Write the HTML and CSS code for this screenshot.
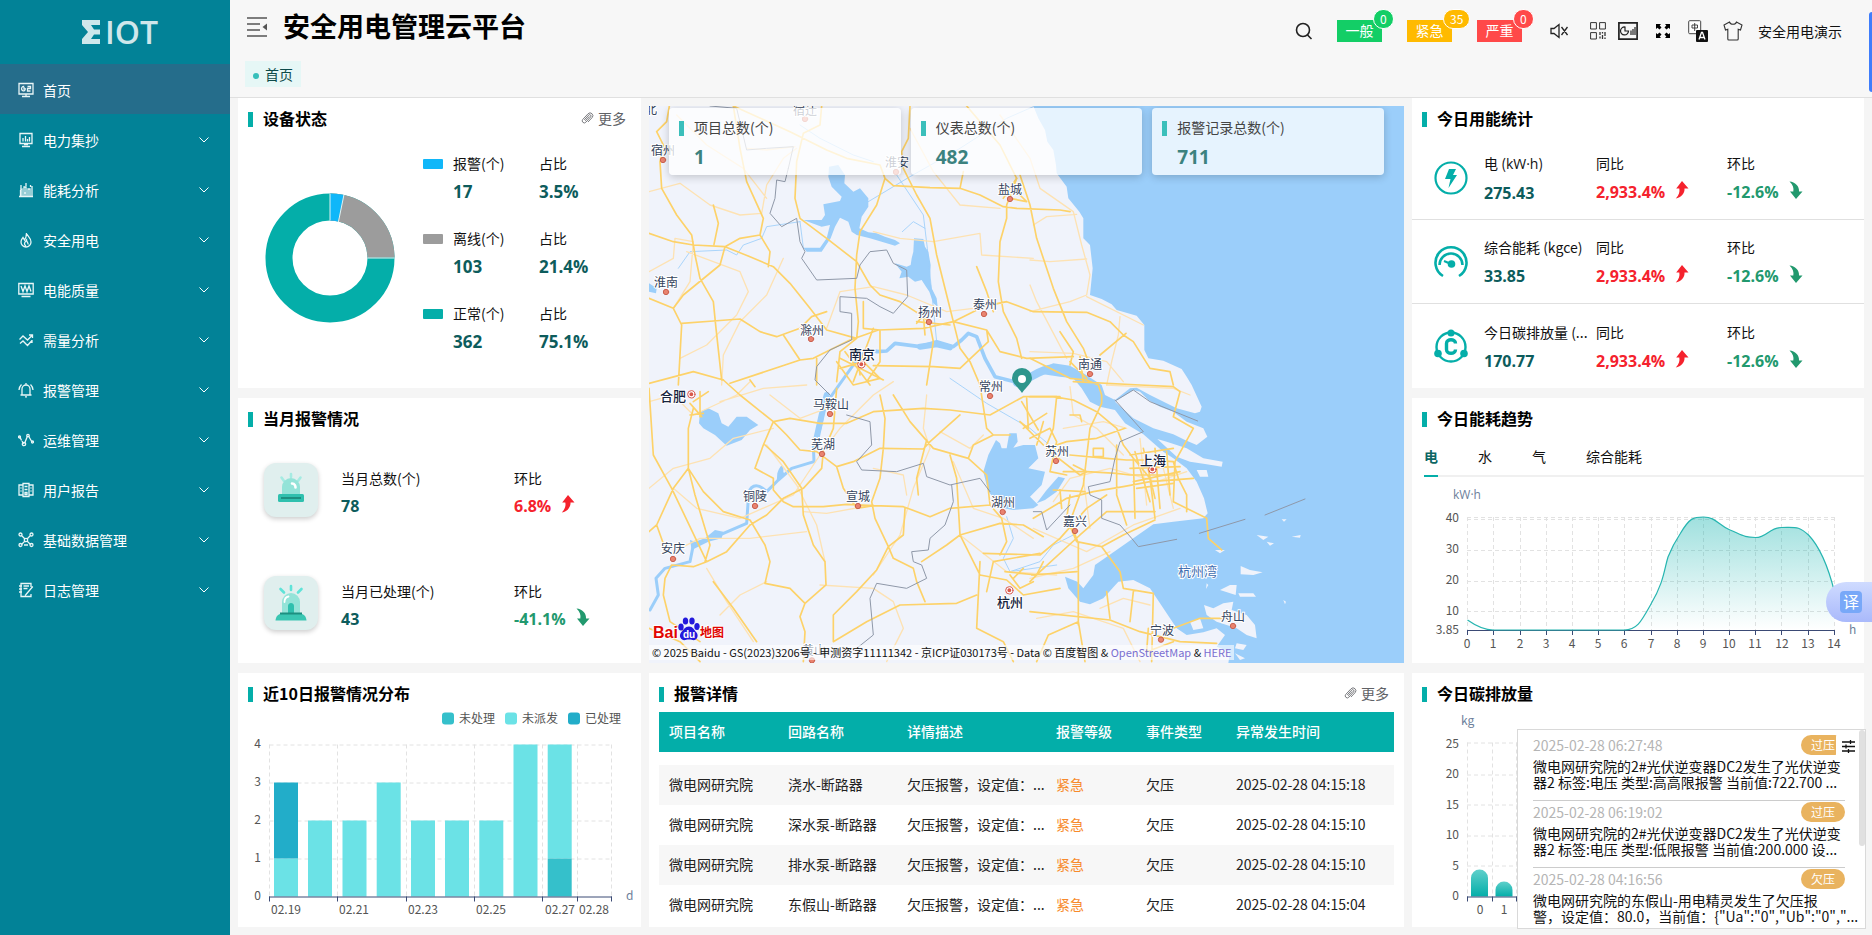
FILE: index.html
```html
<!DOCTYPE html>
<html lang="zh-CN">
<head>
<meta charset="utf-8">
<title>安全用电管理云平台</title>
<link rel="stylesheet" href="styles.css">
</head>
<body>
<svg class="defs" aria-hidden="true">
  <symbol id="chev" viewBox="0 0 12 12"><path d="M1.5 3.5 6 8l4.500-4.500" fill="none" stroke="currentColor"/></symbol>
  <symbol id="up" viewBox="0 0 14 18"><path d="M7 0 13.500 7.500H9.500C10 12 6 17 .8 17.500 4 14 5 11 4.300 7.500H1.200Z" fill="#f5222d"/></symbol>
  <symbol id="down" viewBox="0 0 14 18"><path d="M7 18 13.500 10.500H10C10.500 5 6 1 .5.5 4 4 5 7 4.300 10.500H1Z" fill="#22996e"/></symbol>
  <symbol id="clip" viewBox="0 0 14 14"><path d="M3.500 8.500 8.300 3.300a1.400 1.400 0 0 1 2.100 2L5.200 11a2.200 2.200 0 0 1-3.300-3L7.600 1.900a3 3 0 0 1 4.300 4.200L7.500 10.800M4.500 9.500 9 4.700" fill="none" stroke="currentColor" stroke-width=".9"/></symbol>
</svg>
<div class="app">
  <aside class="side">
    <div class="logo">
      <svg width="19" height="24" viewBox="0 0 19 24"><path d="M0 0H18V5H9l3 4.500h6v5h-6L9 19h9v5H0v-5l6-7-6-7Z" fill="currentColor"/></svg><span>IOT</span>
    </div>
    <nav>
      <a class="item on" href="#"><svg class="mi" viewBox="0 0 16 16"><path d="M1 1.500h14v10.500H1ZM4 14.500h8M8 12v2.500M6.200 4.500a2.200 2.200 0 1 0 1 3.800M6 5v2h2M9.500 4.500h3v2h-3v2.500h3"/></svg>首页</a>
      <a class="item" href="#"><svg class="mi" viewBox="0 0 16 16"><path d="M2 1.500h12v10H2ZM4 14.500h8M6 12.500h4M5 9.500V6M7.500 9.500V4M9.500 9.500V7M11.500 9.500V5"/></svg>电力集抄<svg class="chev"><use href="#chev"/></svg></a>
      <a class="item" href="#"><svg class="mi" viewBox="0 0 16 16"><path d="M1 14.500h14M2.500 14V8M2 7h2v7M6 14V5h2v9M10 14V7h2v7M14 14V4M8 1v3M3 3v3M12.500 3v2M5.500 11h2"/></svg>能耗分析<svg class="chev"><use href="#chev"/></svg></a>
      <a class="item" href="#"><svg class="mi" viewBox="0 0 16 16"><path d="M8.500 1C9 4 13 5.500 13 10a5 5 0 0 1-10 0c0-2 1-3 2-4.500L6.500 8C8 6 8.500 4 8.500 1ZM8 14c-3-2-1-4 .5-6 0 2 2 2.500 1.500 4.500"/></svg>安全用电<svg class="chev"><use href="#chev"/></svg></a>
      <a class="item" href="#"><svg class="mi" viewBox="0 0 16 16"><path d="M.8 1.500h14.400v10.500H.8ZM3.500 14.500h9M3 4l2 5.500L7 4l2 5.500L11 4l2 5.500"/></svg>电能质量<svg class="chev"><use href="#chev"/></svg></a>
      <a class="item" href="#"><svg class="mi" viewBox="0 0 16 16"><path d="M1.500 7.500 5 4l4.500 4L14 3.500M11 3h3.500v3M2 11.500l3-2.500 4.500 4.500L14 8.500M14 8v3"/></svg>需量分析<svg class="chev"><use href="#chev"/></svg></a>
      <a class="item" href="#"><svg class="mi" viewBox="0 0 16 16"><path d="M2.500 13h11M4 13V7a4 4 0 0 1 8 0v6M8 1v2M7 14.800h2M1 8c0-3 1-4 2.500-5.500M15 8c0-3-1-4-2.500-5.500"/></svg>报警管理<svg class="chev"><use href="#chev"/></svg></a>
      <a class="item" href="#"><svg class="mi" viewBox="0 0 16 16"><path d="M2 5l1.500 3.500M4 9l1.500 3M6.500 11.500 9.500 4M10.500 4l3.500 6"/><circle cx="1.500" cy="5" r="1"/><circle cx="6" cy="12" r="1.700"/><circle cx="10" cy="3.500" r="1.200"/><circle cx="14.500" cy="10" r="1"/></svg>运维管理<svg class="chev"><use href="#chev"/></svg></a>
      <a class="item" href="#"><svg class="mi" viewBox="0 0 16 16"><path d="M1 3h4v10H1ZM5 1.500h6v13H5ZM11 3h4v10h-4ZM2.500 6h1M2.500 9h1M12.500 6h1M12.500 9h1M6.500 4.500h3M6.500 7.500h3M7 10.500h2v2H7Z"/></svg>用户报告<svg class="chev"><use href="#chev"/></svg></a>
      <a class="item" href="#"><svg class="mi" viewBox="0 0 16 16"><path d="M3.500 3.500 7 7M12.500 3.500 9 7M3.500 12.500 7 9M12.500 12.500 9 9M6 13h4"/><circle cx="2.500" cy="2.500" r="1.500"/><circle cx="13.500" cy="2.500" r="1.500"/><circle cx="2.500" cy="13" r="1.500"/><circle cx="13.500" cy="13" r="1.500"/><circle cx="8" cy="8" r="1.700"/></svg>基础数据管理<svg class="chev"><use href="#chev"/></svg></a>
      <a class="item" href="#"><svg class="mi" viewBox="0 0 16 16"><path d="M13 5V1.500H3v13h10V12M1 4h3M1 7h3M1 10h3M5.500 4h5.500M5.500 6.500h4M14.800 4.500 8 12.500l-1 1"/></svg>日志管理<svg class="chev"><use href="#chev"/></svg></a>
    </nav>
  </aside>

  <div class="body">
    <header>
      <div class="bar">
        <button class="ib fold" aria-label="折叠菜单"><svg width="20" height="20" viewBox="0 0 20 20"><path d="M0 1h20M0 7h13M0 13h13M0 19h20" stroke="#555" stroke-width="1.500" fill="none"/><path d="M20 6.500v7L15.500 10Z" fill="#555"/></svg></button>
        <h1>安全用电管理云平台</h1>
        <div class="tools">
          <button class="ib t-search" aria-label="搜索"><svg width="18" height="18" viewBox="0 0 18 18"><circle cx="8" cy="8" r="6.500" fill="none" stroke="#222" stroke-width="1.600"/><path d="m12.500 13 4 4" stroke="#222" stroke-width="1.600"/></svg></button>
          <button class="lv green">一般<span>0</span></button>
          <button class="lv amber">紧急<span>35</span></button>
          <button class="lv red">严重<span>0</span></button>
          <button class="ib t-mute" aria-label="静音"><svg width="18" height="16" viewBox="0 0 18 16"><path d="M1 5.500v5h3l5 4V1.500l-5 4ZM11.500 4l6 8M17.500 4l-6 8" fill="none" stroke="#222" stroke-width="1.300"/></svg></button>
          <button class="ib t-qr" aria-label="二维码"><svg width="16" height="18" viewBox="0 0 16 18"><path d="M.6.6h5.800v6.400H.6ZM9.600.6h5.800v6.400H9.600ZM.6 10.600h5.800V17H.6Z" fill="none" stroke="#333"/><path d="M10 10v3M10 14.500v2M12.500 10v1.500M12.500 13v4M15 10v4M15 15.500V17" stroke="#333" stroke-width="1.300"/></svg></button>
          <button class="ib t-chart" aria-label="图表"><svg width="20" height="18" viewBox="0 0 20 18"><path d="M.9.9h18.200v16.200H.9Z" fill="none" stroke="#222" stroke-width="1.700"/><path d="M7 5a4 4 0 1 0 3.500 4H7ZM13 13V8.500M15 13V7M17 13V5" fill="none" stroke="#222" stroke-width="1.200"/></svg></button>
          <button class="ib t-full" aria-label="全屏"><svg width="14" height="14" viewBox="0 0 14 14"><path d="M0 0h5L3.700 1.500 5.500 3.500l-2 2L1.500 3.700 0 5ZM14 0v5l-1.500-1.300-2 1.800-2-2 1.800-2L9 0ZM0 14V9l1.500 1.300 2-1.800 2 2-1.800 2L5 14ZM14 14H9l1.300-1.500-1.800-2 2-2 2 1.800L14 9Z" fill="#000"/></svg></button>
          <button class="ib t-lang" aria-label="切换语言"><svg width="20" height="22" viewBox="0 0 20 22"><rect x=".7" y=".7" width="12" height="13" rx="1" fill="#fff" stroke="#444"/><rect x="8" y="10" width="12" height="12" rx="1" fill="#111"/><path d="M4 5h5.500v3H4ZM6.700 3v8" fill="none" stroke="#333" stroke-width=".9"/><path d="m11 19.500 2.500-7h1l2.500 7M12 17.500h4" fill="none" stroke="#fff" stroke-width="1.300"/></svg></button>
          <button class="ib t-skin" aria-label="主题"><svg width="20" height="20" viewBox="0 0 20 20"><path d="M6.500 1 1 4l1.500 5 2.300-.8V18q0 1 1 1h8.400q1 0 1-1V8.200l2.300.8L19 4l-5.500-3C12.500 4 7.500 4 6.500 1Z" fill="none" stroke="#333" stroke-width="1.100"/></svg></button>
          <a class="user" href="#">安全用电演示</a>
        </div>
      </div>
      <div class="tabs"><a class="tab" href="#">首页</a></div>
    </header>

    <main>
      <section class="card c-dev">
        <div class="hd"><h2>设备状态</h2><a class="more" href="#"><svg><use href="#clip"/></svg>更多</a></div>
        <div class="dev">
          <svg class="donut" viewBox="0 0 130 130" role="img" aria-label="设备状态占比">
            <g transform="rotate(-90 65 65)" fill="none" stroke-width="27">
              <circle cx="65" cy="65" r="51" stroke="#04aea9"/>
              <circle cx="65" cy="65" r="51" stroke="#9c9c9c" pathLength="1000" stroke-dasharray="249 751"/>
              <circle cx="65" cy="65" r="51" stroke="#10b7f9" pathLength="1000" stroke-dasharray="35 965"/>
            </g>
            <path d="M65 .5v27M78.900 2l-5.500 27M102.500 65h27" stroke="#dff3f3" stroke-width="1"/>
          </svg>
          <div class="stat">
            <i class="sw blue"></i><span>报警(个)</span><span>占比</span><b>17</b><b>3.5%</b>
            <i class="sw gray"></i><span>离线(个)</span><span>占比</span><b>103</b><b>21.4%</b>
            <i class="sw teal"></i><span>正常(个)</span><span>占比</span><b>362</b><b>75.1%</b>
          </div>
        </div>
      </section>

      <section class="card c-mon">
        <div class="hd"><h2>当月报警情况</h2></div>
        <div class="mon">
          <div class="mrow">
            <div class="tile"><svg width="32" height="36" viewBox="0 0 32 36"><path d="M16 2v3M6.500 5.500 9 9M25.500 5.500 23 9" stroke="#a5ebe2" stroke-width="2.600" stroke-linecap="round"/><path d="M7 24V15a9 9 0 0 1 18 0v9Z" fill="#94e3d8"/><path d="M17 11.500c3 0 3.500 3 3.500 4" fill="none" stroke="#fff" stroke-width="2.600" stroke-linecap="round"/><rect x="3" y="22" width="26" height="8" rx="1.500" fill="#2fc0ae"/><path d="M6 26h20" stroke="#1d8f80" stroke-width="2"/></svg></div>
            <div class="mt"><span>当月总数(个)</span><b>78</b></div>
            <div class="mt"><span>环比</span><b class="r">6.8%<svg class="ar"><use href="#up"/></svg></b></div>
          </div>
          <div class="mrow">
            <div class="tile"><svg width="32" height="40" viewBox="0 0 32 40"><path d="M16 3v4M5.500 6 9 9.500M26.500 6 23 9.500" stroke="#5fe3d8" stroke-width="2.600" stroke-linecap="round"/><path d="M7 31V19a9 9 0 0 1 18 0v12Z" fill="#94e3d8"/><path d="M9.500 19c0-3 1.500-5 4-5.500" fill="none" stroke="#fff" stroke-width="1.800" stroke-linecap="round"/><path d="M13 31v-8c0-4 6-4 6 0v8Z" fill="#2fc0ae"/><path d="M.500 37.500C1 33 3 31.500 6 30.500h20c3 1 5 2.500 5.500 7Z" fill="#3ac6b2"/><path d="M5 30.500h22" stroke="#1d8f80" stroke-width="2"/></svg></div>
            <div class="mt"><span>当月已处理(个)</span><b>43</b></div>
            <div class="mt"><span>环比</span><b class="g">-41.1%<svg class="ar"><use href="#down"/></svg></b></div>
          </div>
        </div>
      </section>

      <section class="card c-ten">
        <div class="hd"><h2>近10日报警情况分布</h2></div>
        <svg class="chart" viewBox="238 708 403 218" role="img" aria-label="近10日报警情况分布">
          <g class="lab"><rect x="442" y="712" width="12" height="12" rx="3" fill="#35c0cb"/><text x="459" y="722">未处理</text><rect x="505" y="712" width="12" height="12" rx="3" fill="#6be2e6"/><text x="522" y="722">未派发</text><rect x="568" y="712" width="12" height="12" rx="3" fill="#22adc9"/><text x="585" y="722">已处理</text></g>
          <path class="grid" d="M269.500 744.500H611M269.500 782.500H611M269.500 820.500H611M269.500 858.500H611M269.500 744V896M337.500 744V896M406.500 744V896M474.500 744V896M542.500 744V896M577.500 744V896M611.500 744V896"/>
          <g fill="#6be2e6"><path d="M274 858h24v38h-24ZM308 820h24v76h-24ZM342.500 820h24v76h-24ZM376.700 782h24v114h-24ZM411 820h24v76h-24ZM445 820h24v76h-24ZM479.300 820h24v76h-24ZM513.500 744h24v152h-24ZM547.700 744h24v114h-24Z"/></g>
          <path d="M274 782h24v76h-24Z" fill="#22adc9"/><path d="M547.700 858h24v38h-24Z" fill="#35c0cb"/>
          <path class="axis" d="M269 896.500H612M269.500 896v5M337.500 896v5M406.500 896v5M474.500 896v5M542.500 896v5M577.500 896v5M611.500 896v5"/>
          <g class="lab end"><text x="261" y="747">4</text><text x="261" y="785">3</text><text x="261" y="823">2</text><text x="261" y="861">1</text><text x="261" y="899">0</text></g>
          <g class="lab mid"><text x="286" y="913">02.19</text><text x="354" y="913">02.21</text><text x="423" y="913">02.23</text><text x="491" y="913">02.25</text><text x="560" y="913">02.27</text><text x="594" y="913">02.28</text></g>
          <text class="unit" x="626" y="899">d</text>
        </svg>
      </section>

      <section class="map">
        <svg class="mapsvg" viewBox="0 0 755 557" preserveAspectRatio="xMidYMid slice" role="img" aria-label="项目分布地图">
          <rect width="755" height="557" fill="#f0f3fb"/>
          <g transform="translate(-9 -11) scale(.33333)" stroke-linejoin="round" stroke-linecap="round">
            <g class="water">
              <path d="M1180 33 1195 70 1215 105 1222 140 1240 165 1248 210 1250 235 1280 275 1285 310 1318 350 1330 370 1330 430 1350 450 1358 520 1350 600 1385 612 1415 628 1430 645 1490 662 1513 690 1513 765 1525 790 1570 797 1625 822 1640 845 1655 870 1685 935 1680 950 1665 955 1610 940 1530 900 1490 878 1470 880 1425 915 1395 900 1385 870 1330 835 1290 812 1240 805 1200 822 1210 838 1260 845 1300 850 1325 880 1350 920 1380 935 1425 945 1455 985 1510 1018 1570 1070 1600 1090 1640 1120 1670 1160 1692 1210 1703 1255 1690 1270 1600 1280 1540 1288 1480 1330 1420 1372 1365 1410 1360 1440 1330 1480 1312 1460 1275 1445 1285 1480 1320 1520 1350 1528 1390 1510 1435 1460 1480 1455 1530 1480 1560 1525 1590 1570 1610 1600 1640 1620 1690 1612 1730 1600 1755 1620 1730 1655 1770 1670 1765 1705 2300 1710 2300 33Z"/>
              <path d="M567 215 595 210 615 240 613 265 640 290 660 280 685 310 685 335 665 365 658 400 685 412 710 415 735 425 765 435 780 445 765 452 725 440 690 430 650 420 635 410 625 380 600 368 585 395 572 430 545 470 500 470 490 458 540 458 560 430 570 390 545 395 490 375 545 375 555 360 550 328 600 318 605 305 575 275 565 245Z"/>
              <path d="M822 430 850 432 855 455 865 470 872 510 870 550 875 580 890 610 893 635 880 625 868 590 858 575 845 555 825 560 805 545 778 550 785 530 765 505 800 515 812 510 815 490 820 470Z"/>
              <path d="M180 950 205 940 235 955 245 985 265 995 290 965 320 965 355 990 330 1005 305 1035 260 1052 225 1020 190 1000 177 985Z"/>
              <path d="M1068 1035 1080 1045 1085 1060 1100 1060 1108 1015 1130 1015 1133 1040 1120 1058 1150 1050 1185 1050 1195 1090 1165 1120 1215 1130 1205 1170 1170 1205 1195 1230 1180 1240 1120 1245 1090 1240 1045 1190 1030 1130 1045 1080Z"/>
              <path d="M1190 1225 1220 1185 1255 1145 1275 1150 1250 1190 1215 1215Z"/>
              <path d="M27 565 50 580 48 595 27 590Z"/>
              <path d="M412 1135C420 1110 432 1100 430 1130L435 1140 410 1160ZM150 1335 165 1340 195 1330 225 1305 250 1310 245 1330 205 1340 155 1365Z"/>
            </g>
            <g class="river">
              <path d="M710 770 740 768 765 745 840 755 890 740 940 755 965 735 985 715 1010 725 1035 790 1065 845 1130 862" stroke-width="11"/>
              <path d="M710 768C680 765 660 775 640 810L590 880 555 930 540 1000 520 1050 522 1100 455 1120 415 1155 380 1190C350 1160 325 1170 325 1210L320 1285 240 1320 160 1350 150 1400 75 1420 48 1450 55 1500 30 1545" stroke-width="9"/>
              <path d="M1130 862C1180 850 1190 825 1240 820" stroke-width="24"/>
              <path d="M560 900 545 960 525 1050M840 755 890 748 930 757" stroke-width="18"/>
              <path d="M685 320 810 245 960 160 1100 70 1180 35M770 240 850 360 862 460 890 740M480 380 380 395 365 430 310 450 290 480 260 465 150 470 115 520M480 90 540 130 640 180 700 200M787 410 820 380 855 400M930 850 1040 925 1170 1000 1240 1060M1100 1265 1120 1330 1090 1390 1110 1430M1110 1430 1200 1400 1240 1350 1300 1320M1110 1430 1250 1410M480 380 490 458" stroke-width="2.500"/>
            </g>
            <g class="land">
              <path d="M1425 920 1480 885 1500 890 1525 915 1560 935 1600 950 1640 980 1690 1000 1702 1025 1670 1050 1635 1035 1600 1018 1540 1000 1480 970Z"/>
              <path d="M1552 1032 1580 1040 1640 1060 1690 1090 1748 1100 1745 1115 1700 1108 1650 1100 1610 1085Z"/>
              <path d="M1670 1125 1700 1125 1705 1145 1680 1145ZM1740 1485 1770 1470 1790 1470 1787 1500ZM1795 1495 1840 1495 1848 1505 1800 1505ZM1802 1413 1830 1425 1868 1432 1840 1440 1802 1438ZM1850 1320 1885 1325 1870 1335ZM1880 1340 1902 1345 1890 1352ZM1955 1325 1982 1320 1980 1328ZM1925 1273 1940 1273 1932 1280ZM1930 1515 1938 1520 1935 1528ZM1692 1530 1720 1540 1750 1525 1780 1520 1775 1545 1820 1560 1845 1590 1850 1630 1820 1620 1790 1600 1730 1580 1700 1560ZM1650 1580 1680 1570 1690 1600 1660 1605ZM1790 1645 1820 1650 1810 1665 1785 1660ZM1785 1675 1815 1690 1800 1695ZM1725 1365 1755 1365 1740 1375ZM1700 1465 1705 1470 1698 1482Z"/>
            </g>
            <g class="minor">
              <path d="M27 290 120 265 210 330 300 360 365 355 380 270 430 190 470 160M110 60 200 150 310 220 380 310M320 160 380 165 465 155M27 530 100 490 105 430 160 440 150 560 100 640M140 470 300 530 325 590 290 660 200 750 120 790M430 490 380 600 300 680 250 780 245 870M560 700 600 590 700 575 800 600 920 650 1000 640 1100 620M700 410 780 430 880 440 1020 415 1025 480 1180 490M810 100 880 230 960 330 1080 340M1080 60 1170 190 1200 280 1300 350 1325 450 1350 540 1340 600 1290 620 1170 650M1180 390 1220 365 1310 358M1170 495 1230 500 1340 492M1170 570 1190 620 1280 790M1440 665 1435 720 1415 800 1400 870M1340 605 1510 690"/>
              <path d="M27 920 100 900 160 960 290 900 330 860M380 1050 470 1170 530 1290 555 1400M27 1180 100 1120 210 1090 280 1030 400 1000M100 1180 170 1240 300 1270 460 1200 540 1080 600 1000 700 900 760 860M200 1420 260 1520 340 1640M240 1560 300 1500 380 1460M540 1470 700 1480 760 1520 790 1600 740 1700M860 900 850 1000 870 1060 820 1180 780 1320 700 1440M900 1010 990 1060 1030 1020M940 1100 1000 1240 1090 1270 1180 1330M960 1320 1100 1430 1250 1440M700 1120 790 1140 800 1200M120 1360 180 1330 330 1330 500 1310M490 1250 560 1255 700 1230M390 900 480 970 560 940M240 920 370 880 500 870"/>
              <path d="M1170 770 1300 775 1400 800 1450 860M1400 870 1600 880 1650 900M1290 875 1300 960 1370 1000 1450 1080M1240 1220 1290 1150 1410 1120 1550 1160 1640 1130M1180 1300 1340 1370 1480 1290 1620 1240M1170 1450 1300 1420 1410 1370M1380 1540 1450 1510 1530 1530M1190 1570 1300 1550 1450 1600 1500 1700M1270 1000 1390 980 1460 1000M1330 1150 1350 1300M1500 1030 1520 1230M1560 1080 1600 1240"/>
            </g>
            <g class="major">
              <path d="M88 33 80 80 50 110 70 150 60 200 65 280 110 360 155 420 165 480 180 550 220 620 228 700 245 855M27 415 100 440 160 450 255 455 330 485 400 515 450 565 510 640 560 705 650 730M255 455 300 430 360 420 370 370 320 260 300 160 280 33M360 420 390 470 385 515M255 455 240 510 130 600 100 640 125 690 115 870M220 330 235 385 222 448M545 33 540 90 490 115 470 200 465 310 480 370 560 430 650 500 690 570 720 600 780 620 850 665M280 33 450 110 560 165 620 190 720 210 735 250 710 330 660 410 650 480 645 580 655 680 650 730 600 770 590 860M810 33 805 130 785 170 790 220 830 300 870 370 890 480 920 600 945 700 960 760 990 800 1020 870M735 250 760 272 870 278 960 280 1020 300 1090 335 1130 340 1260 345 1290 350M1130 250 1100 330 1100 370 1080 440 1075 560 1090 650 1130 730 1145 790M1140 240 1170 330 1190 430 1240 580 1280 680 1330 760 1345 800M980 33 1080 150 1130 250M960 280 970 230M1010 515 1040 590 1060 650M27 610 100 640M125 685 220 678 300 672 360 710 410 725 480 700 515 665M430 720 480 795 520 790 630 735 715 705 850 700 940 680 1030 635 1100 620 1180 650 1340 652 1410 680 1450 720 1480 740 1530 820 1590 830 1600 870M940 680 1040 705 1080 770 1160 790 1300 785M480 795 270 865M515 665 560 650M830 685 850 660 870 690 880 740 860 870M1040 705 1045 740 960 820 880 815 700 812M670 620 670 700 720 705 720 800 680 860M590 800 640 870 720 850 670 800 600 820M530 790 530 870M1458 715 1380 780M1260 710 1300 770 1290 810M27 865 160 830 250 855"/>
              <path d="M250 855 300 900 400 980 450 970 540 985 620 985 700 950 850 940 930 945 1050 960 1150 905 1260 905M400 980 370 1050 345 1120 400 1150 400 1185 430 1220 460 1235 550 1235 620 1228 700 1232 790 1235 870 1265 930 1240 1050 1230M400 980 440 1020 480 1065 530 1070 590 1115 640 1100 720 1060 850 1062 870 1040 960 960M375 1050 430 1100 485 1180 490 1260 520 1350 555 1400 558 1470 495 1525 480 1565 495 1610 490 1700M590 1115 610 1180 650 1240 700 1232M720 900 735 970 730 1060 720 1150 695 1220 705 1270 745 1355 710 1425 650 1490 580 1560 580 1640 680 1580 780 1530 950 1525 1010 1500M745 1355 790 1320 795 1240M745 1355 760 1390 820 1420 830 1460 855 1520M345 875 330 855M160 940 145 1000 145 1120 100 1180 50 1290 75 1360M145 1120 190 1190 250 1250 330 1275 375 1350 390 1400 375 1465 450 1480 495 1525M195 1400 210 1350 165 1200 145 1120M27 1310 50 1290M27 880 40 1080 95 1180 200 1400 160 1415 95 1410 75 1450 70 1500 90 1580 180 1640M200 1400 260 1370 330 1290 380 1260 430 1210 490 1180 545 1120 550 1070 580 1000 590 880M860 1035 830 1150 835 1200M760 900 810 980 880 1060 985 1090 1040 1140 1050 1230 1085 1270 1100 1340 1080 1380M930 1080 950 1150 960 1320 1020 1440 1100 1455 1150 1500 1260 1480M845 1400 920 1350 960 1320 1080 1285 1150 1290 1210 1325M1030 1375 1200 1380 1260 1330 1340 1240 1400 1200M220 1460 280 1540 350 1640M27 1600 120 1640 180 1700M1020 1400 1010 1600 1090 1640 1120 1700M985 1090 1000 1050 1060 1020 1110 1020M1020 870 1040 1000 1060 1020M1160 910 1165 1000 1140 980M1140 980 1210 1050M1190 1050 1210 980M1170 1030 1230 1000 1250 1040 1230 1130 1280 1140M1300 1110 1340 1130 1320 1140 1230 1070"/>
              <path d="M150 925 185 965M160 920 205 890M180 890 180 965M150 960 190 955M1145 920 1195 1005M1150 1000 1220 955"/>
              <path d="M1170 790 1290 850 1340 855 1375 870 1385 900 1385 925 1350 1000 1330 1170 1290 1280 1315 1345 1315 1590M1240 905 1300 915 1370 950 1430 1000 1450 1050 1480 1090 1530 1150 1545 1270M1170 905 1250 905 1240 1000 1220 1050M1220 1060 1280 1040 1370 1030 1455 1000M1290 1080 1400 1090 1460 1095 1520 1095 1600 1100 1615 1150 1640 1200 1640 1250M1270 1130 1340 1130 1430 1135 1470 1140 1600 1140M1180 1270 1280 1210 1360 1190 1450 1175 1530 1160 1660 1150M1240 1185 1335 1190M1260 1185 1265 1240M1300 860 1500 870 1600 875 1620 890 1600 965 1660 1000 1605 1100 1600 1220 1700 1270 1705 1330 1745 1365M1430 1050 1430 1200 1460 1290M1480 1090 1485 1270M1545 1250 1400 1250 1320 1320 1200 1430 1170 1460M1545 1275 1450 1320 1385 1355 1310 1340 1280 1270 1290 1200M1385 1355 1440 1430 1450 1480 1540 1495 1535 1700M1600 1600 1680 1570 1750 1570M1310 1430 1175 1440M1480 1490 1470 1580M1400 1490 1410 1570M1170 1550 1410 1575 1500 1610 1620 1640 1730 1645M1525 1600 1520 1670 1600 1640M1315 1580 1225 1620 1190 1700M1315 1580 1335 1700"/>
              <path d="M1470 1080 1600 1060M1470 1120 1620 1115M1480 1160 1620 1130M1490 1180 1600 1165M1485 1070 1530 1220M1510 1060 1545 1210M1545 1060 1560 1240M1580 1070 1590 1200M1360 1060 1390 1060 1390 1085 1360 1085ZM1290 960 1320 960 1325 980"/>
              <path d="M600 790 730 855M615 770 690 870M650 760 660 840M700 700 640 860M830 680 930 690M850 660 855 720M1090 310 1130 250M1110 310 1160 320 1140 300M1095 1430 1190 1440 1210 1400M1110 1440 1140 1480 1180 1460M1120 1450 1150 1420M1040 1490 1060 1400 1200 1375M1290 800 1340 850M1320 785 1330 860"/>
            </g>
            <path class="edge" d="M445 220 435 260 410 255 405 310 390 355 425 395 470 370 480 440 495 470 485 490 530 555 650 550 660 510 690 470 740 465 760 505 800 525 803 605 760 655 720 635 680 610 600 605 600 650 635 655 635 735 570 765 530 815 525 855 570 900M620 960 690 980 695 1050 650 1100 665 1125 770 1130 850 1105 860 1145 930 1170 1020 1150 1050 1190M935 1170 940 1220 915 1290 870 1330 865 1365 815 1370 820 1400 845 1410 860 1450 800 1480 710 1465 690 1510 700 1620 650 1660M1425 915 1510 1010 1440 1040 1425 1090 1410 1160 1345 1175 1350 1200 1385 1215 1385 1270 1440 1290 1475 1330 1495 1355 1610 1333M1430 915 1480 885 1530 920 1673 978M1678 1315 1815 1273M1875 1260 1995 1212M210 33 290 40 320 165 380 160 460 155 445 220M1290 1230 1220 1305 1205 1250 1180 1250"/>
            <g fill="#e9836f" stroke="#c9604f" stroke-width="3">
              <circle cx="69" cy="195" r="8"/><circle cx="495" cy="72" r="8"/><circle cx="768" cy="231" r="8"/><circle cx="1110" cy="312" r="8"/><circle cx="78" cy="591" r="8"/><circle cx="867" cy="681" r="8"/><circle cx="1032" cy="657" r="8"/><circle cx="513" cy="732" r="8"/><circle cx="1350" cy="837" r="8"/><circle cx="570" cy="957" r="8"/><circle cx="1050" cy="903" r="8"/><circle cx="546" cy="1077" r="8"/><circle cx="1248" cy="1098" r="8"/><circle cx="345" cy="1233" r="8"/><circle cx="654" cy="1233" r="8"/><circle cx="1088" cy="1251" r="8"/><circle cx="99" cy="1392" r="8"/><circle cx="1305" cy="1308" r="8"/><circle cx="1563" cy="1634" r="8"/><circle cx="1779" cy="1593" r="8"/><circle cx="516" cy="1696" r="8"/>
            </g>
            <g fill="#d9584c" stroke="#fff" stroke-width="4"><circle cx="664" cy="808" r="8"/><circle cx="154" cy="898" r="8"/><circle cx="1537" cy="1123" r="8"/><circle cx="1108" cy="1486" r="8"/></g>
            <g fill="none" stroke="#d9584c" stroke-width="3"><circle cx="664" cy="808" r="11"/><circle cx="154" cy="898" r="11"/><circle cx="1537" cy="1123" r="11"/><circle cx="1108" cy="1486" r="11"/></g>
          </g>
          <g class="city"><text x="-4" y="8">北</text><text x="2" y="49">宿州</text><text x="144" y="9">宿迁</text><text x="236" y="61">淮安</text><text x="349" y="88">盐城</text><text x="5" y="181">淮南</text><text x="269" y="211">扬州</text><text x="324" y="203">泰州</text><text x="151" y="229">滁州</text><text x="429" y="263">南通</text><text x="164" y="303">马鞍山</text><text x="330" y="285">常州</text><text x="162" y="343">芜湖</text><text x="396" y="350">苏州</text><text x="94" y="395">铜陵</text><text x="197" y="395">宣城</text><text x="342" y="401">湖州</text><text x="12" y="447">安庆</text><text x="414" y="420">嘉兴</text><text x="501" y="529">宁波</text><text x="572" y="515">舟山</text><text x="153" y="549">黄山</text></g>
          <g class="city big"><text x="200" y="253">南京</text><text x="11" y="295">合肥</text><text x="491" y="359">上海</text><text x="348" y="501">杭州</text></g>
          <text class="bay" x="529" y="470">杭州湾</text>
          <path d="M373 287C368 280 363 277 363 272a10 10 0 0 1 20 0C383 277 378 280 373 287Z" fill="#2e968c"/><circle cx="373" cy="273" r="4" fill="#fff"/>
        </svg>
        <div class="kpis">
          <div class="kpi"><span>项目总数(个)</span><b>1</b></div>
          <div class="kpi"><span>仪表总数(个)</span><b>482</b></div>
          <div class="kpi"><span>报警记录总数(个)</span><b>711</b></div>
        </div>
        <div class="brand"><span>Bai</span><svg width="22" height="24" viewBox="0 0 22 24" fill="#2319dc"><ellipse cx="3" cy="10" rx="2.700" ry="3.500"/><ellipse cx="7.500" cy="4" rx="2.700" ry="3.600"/><ellipse cx="14" cy="4" rx="2.700" ry="3.600"/><ellipse cx="19" cy="9.500" rx="2.700" ry="3.500"/><path d="M11 9.500c4 0 5 3.500 7.500 6 3 4-.5 8.500-4 7.500-2-.6-5-.6-7 0C4 24 0 20 3 15.500 5.500 13 7 9.500 11 9.500Z"/><text x="5" y="21" class="du">du</text></svg><span class="dt">地图</span></div>
        <p class="copy">© 2025 Baidu - GS(2023)3206号 - 甲测资字11111342 - 京ICP证030173号 - Data © 百度智图 &amp; <a href="#">OpenStreetMap</a> &amp; <a href="#">HERE</a></p>
      </section>

      <section class="card c-tab">
        <div class="hd"><h2>报警详情</h2><a class="more" href="#"><svg><use href="#clip"/></svg>更多</a></div>
        <table>
          <thead><tr><th>项目名称</th><th>回路名称</th><th>详情描述</th><th>报警等级</th><th>事件类型</th><th>异常发生时间</th></tr></thead>
          <tbody>
            <tr><td>微电网研究院</td><td>浇水-断路器</td><td>欠压报警，设定值：...</td><td class="o">紧急</td><td>欠压</td><td>2025-02-28 04:15:18</td></tr>
            <tr><td>微电网研究院</td><td>深水泵-断路器</td><td>欠压报警，设定值：...</td><td class="o">紧急</td><td>欠压</td><td>2025-02-28 04:15:10</td></tr>
            <tr><td>微电网研究院</td><td>排水泵-断路器</td><td>欠压报警，设定值：...</td><td class="o">紧急</td><td>欠压</td><td>2025-02-28 04:15:10</td></tr>
            <tr><td>微电网研究院</td><td>东假山-断路器</td><td>欠压报警，设定值：...</td><td class="o">紧急</td><td>欠压</td><td>2025-02-28 04:15:04</td></tr>
          </tbody>
        </table>
      </section>

      <section class="card c-use">
        <div class="hd"><h2>今日用能统计</h2></div>
        <div class="use">
          <div class="urow"><svg viewBox="0 0 34 34"><circle cx="17" cy="17" r="15.500" fill="none" stroke="#04aea9" stroke-width="2.200"/><path d="M15 8h7l-3 6h4l-8.500 13 2-9H11Z" fill="#04aea9"/></svg>
            <div><span>电 (<em>kW·h</em>)</span><b>275.43</b></div><div><span>同比</span><b class="r">2,933.4%<svg class="ar"><use href="#up"/></svg></b></div><div><span>环比</span><b class="g">-12.6%<svg class="ar"><use href="#down"/></svg></b></div></div>
          <div class="urow"><svg viewBox="0 0 34 34"><path d="M9 31A15.500 15.500 0 1 1 25 31" fill="none" stroke="#04aea9" stroke-width="2.600"/><path d="M5.500 20a11.500 11.500 0 0 1 23 0" fill="none" stroke="#04aea9" stroke-width="2.600"/><circle cx="17.500" cy="19" r="3.800" fill="#04aea9"/><path d="m10 16 7 3" stroke="#04aea9" stroke-width="2"/></svg>
            <div><span>综合能耗 (kgce)</span><b>33.85</b></div><div><span>同比</span><b class="r">2,933.4%<svg class="ar"><use href="#up"/></svg></b></div><div><span>环比</span><b class="g">-12.6%<svg class="ar"><use href="#down"/></svg></b></div></div>
          <div class="urow"><svg viewBox="0 0 34 34"><circle cx="17" cy="18" r="14.500" fill="none" stroke="#04aea9" stroke-width="2.400"/><g fill="#04aea9"><circle cx="17" cy="4" r="3.500"/><circle cx="4" cy="24.500" r="3.800"/><circle cx="30" cy="24.500" r="3.800"/></g><path d="M21.500 14.500c0-5-9-5-9 0v6c0 5 9 5 9 0" fill="none" stroke="#04aea9" stroke-width="3.400"/></svg>
            <div><span>今日碳排放量 (...</span><b>170.77</b></div><div><span>同比</span><b class="r">2,933.4%<svg class="ar"><use href="#up"/></svg></b></div><div><span>环比</span><b class="g">-12.6%<svg class="ar"><use href="#down"/></svg></b></div></div>
        </div>
      </section>

      <section class="card c-trend">
        <div class="hd"><h2>今日能耗趋势</h2></div>
        <div class="etabs"><button class="on">电</button><button>水</button><button>气</button><button>综合能耗</button></div>
        <svg class="chart" viewBox="1412 478 452 184" role="img" aria-label="今日能耗趋势">
          <defs><linearGradient id="ag" x1="0" y1="0" x2="0" y2="1"><stop offset="0" stop-color="#04aea9" stop-opacity=".38"/><stop offset="1" stop-color="#04aea9" stop-opacity="0"/></linearGradient></defs>
          <path class="grid" d="M1467 517.500H1834M1467 519.500H1834M1467 550.500H1834M1467 581.500H1834M1467 611.500H1834M1467.500 517V630M1493.500 517V630M1520.500 517V630M1546.500 517V630M1572.500 517V630M1598.500 517V630M1624.500 517V630M1651.500 517V630M1677.500 517V630M1703.500 517V630M1729.500 517V630M1755.500 517V630M1781.500 517V630M1808.500 517V630M1834.500 517V630"/>
          <path class="axis" d="M1467 630.500H1835M1467.500 630v5M1493.500 630v5M1520.500 630v5M1546.500 630v5M1572.500 630v5M1598.500 630v5M1624.500 630v5M1651.500 630v5M1677.500 630v5M1703.500 630v5M1729.500 630v5M1755.500 630v5M1781.500 630v5M1808.500 630v5M1834.500 630v5"/>
          <path fill="url(#ag)" d="M1467.500 620C1476 626 1484 630 1493.500 630H1624C1637 630 1641 622 1651 604C1664 582 1664 570 1668 557C1672 547 1676 540 1680 534C1690 517 1694 517 1703.500 517C1716 517 1718 525 1730 530C1742 535 1744 537.500 1755.500 537.500C1767 537.500 1769 527.500 1781.500 527.500C1796 527.500 1799 526 1808.500 535C1822 549 1829 570 1834.500 592V630H1467.500Z"/>
          <path fill="none" stroke="#26b5b0" stroke-width="1.200" d="M1467.500 620C1476 626 1484 630 1493.500 630H1624C1637 630 1641 622 1651 604C1664 582 1664 570 1668 557C1672 547 1676 540 1680 534C1690 517 1694 517 1703.500 517C1716 517 1718 525 1730 530C1742 535 1744 537.500 1755.500 537.500C1767 537.500 1769 527.500 1781.500 527.500C1796 527.500 1799 526 1808.500 535C1822 549 1829 570 1834.500 592"/>
          <text class="unit lat" x="1453" y="499">kW·h</text><text class="unit" x="1849" y="634">h</text>
          <g class="lab end"><text x="1459" y="522">40</text><text x="1459" y="553">30</text><text x="1459" y="584">20</text><text x="1459" y="615">10</text><text x="1459" y="634">3.85</text></g>
          <g class="lab mid"><text x="1467" y="648">0</text><text x="1493" y="648">1</text><text x="1520" y="648">2</text><text x="1546" y="648">3</text><text x="1572" y="648">4</text><text x="1598" y="648">5</text><text x="1624" y="648">6</text><text x="1651" y="648">7</text><text x="1677" y="648">8</text><text x="1703" y="648">9</text><text x="1729" y="648">10</text><text x="1755" y="648">11</text><text x="1782" y="648">12</text><text x="1808" y="648">13</text><text x="1834" y="648">14</text></g>
        </svg>
      </section>

      <section class="card c-co">
        <div class="hd"><h2>今日碳排放量</h2></div>
        <svg class="chart" viewBox="1412 708 452 218" role="img" aria-label="今日碳排放量">
          <defs><linearGradient id="bg" x1="0" y1="0" x2="0" y2="1"><stop offset="0" stop-color="#5fd0cb"/><stop offset="1" stop-color="#04aea9"/></linearGradient></defs>
          <path class="grid" d="M1467 742.500H1834M1467 774.500H1834M1467 804.500H1834M1467 835.500H1834M1467 865.500H1834M1467.500 742V896M1492.500 742V896M1516.500 742V896"/>
          <path fill="url(#bg)" d="M1471 896V877.500a8.500 8.500 0 0 1 17 0V896Z"/><path fill="url(#bg)" d="M1495.500 896V889.500a8.500 8.500 0 0 1 17 0V896Z"/>
          <path class="axis" d="M1467 896.500H1834M1467.500 896v5M1492.500 896v5M1516.500 896v5"/>
          <text class="unit" x="1461" y="724">kg</text>
          <g class="lab end"><text x="1459" y="747">25</text><text x="1459" y="777">20</text><text x="1459" y="808">15</text><text x="1459" y="838">10</text><text x="1459" y="869">5</text><text x="1459" y="899">0</text></g>
          <g class="lab mid"><text x="1480" y="913">0</text><text x="1504" y="913">1</text></g>
        </svg>
      </section>
    </main>
  </div>
</div>

<div class="pop">
  <article><div><time>2025-02-28 06:27:48</time><span class="tag">过压</span></div><p>微电网研究院的2#光伏逆变器DC2发生了光伏逆变器2 标签:电压 类型:高高限报警 当前值:722.700 ...</p></article>
  <article><div><time>2025-02-28 06:19:02</time><span class="tag">过压</span></div><p>微电网研究院的2#光伏逆变器DC2发生了光伏逆变器2 标签:电压 类型:低限报警 当前值:200.000 设...</p></article>
  <article><div><time>2025-02-28 04:16:56</time><span class="tag">欠压</span></div><p>微电网研究院的东假山-用电精灵发生了欠压报<span class="keep">警，设定值：80.0，当前值：{"Ua":"0","Ub":"0","...</span></p></article>
  <button class="set" aria-label="设置"><svg width="13" height="13" viewBox="0 0 13 13"><path d="M0 2h13M0 6.500h13M0 11h13M8.500 0v4M4 4.500v4M6.500 9v4" stroke="#111" stroke-width="1.300"/></svg></button>
  <i class="thumb"></i>
</div>
<button class="trans" aria-label="翻译"><span>译</span></button>
<i class="dock"></i>
</body>
</html>
```
FILE: styles.css
```css
* { box-sizing: border-box; }
body { margin: 0; background: #f5f5f5; color: #111; font: 14px/20px "Noto Sans CJK SC", "Noto Sans", sans-serif; overflow: hidden; }
a { color: inherit; text-decoration: none; }
button { font: inherit; color: inherit; border: 0; background: none; padding: 0; cursor: pointer; }
h1, h2, p { margin: 0; }
svg { display: block; flex: none; }
b { font-family: "Open Sans", "Noto Sans CJK SC", sans-serif; font-weight: 700; font-size: 16px; color: #0d5c5c; }
em, .lat { font-family: "Open Sans", sans-serif; font-style: normal; }
.defs { position: absolute; width: 0; height: 0; }

.app { display: flex; min-height: 100vh; }
.side { flex: none; width: 230px; background: #028297; color: #fff; }
.logo { display: flex; align-items: center; justify-content: center; gap: 4px; height: 64px; padding-left: 10px; color: #cfe7eb; font: 600 32px/64px "Open Sans", sans-serif; }
.item { display: flex; align-items: center; height: 50px; padding: 2px 20px 0 18px; }
.item.on { background: #256d8b; }
.mi { width: 16px; height: 16px; margin-right: 9px; fill: none; stroke: #e9f6f7; stroke-width: 1.300; }
.chev { width: 12px; height: 12px; margin-left: auto; }

.body { flex: 1; min-width: 0; display: flex; flex-direction: column; }
header { background: #f7f7f7; border-bottom: 1px solid #e0e0e0; }
.bar { display: flex; align-items: flex-start; height: 61px; padding: 0 30px 0 17px; }
.fold { margin: 17px 16px 0 0; }
h1 { font-size: 27px; line-height: 52px; color: #000; }
.tools { margin-left: auto; display: flex; align-items: center; height: 61px; }
.t-search { margin-right: 24px; }
.lv { position: relative; width: 45px; height: 22px; padding: 0 4px; margin-right: 25px; color: #fff; line-height: 21px; text-align: center; white-space: nowrap; }
.lv span { position: absolute; left: 36px; top: -11px; min-width: 20px; height: 20px; padding: 0 6px; border: 1px solid #fff; border-radius: 10px; background: inherit; font-size: 12px; line-height: 17px; }
.green { background: #13ce66; }
.amber { background: #ffba00; }
.red { background: #ff4949; margin-right: 28px; }
.t-mute { margin-right: 22px; }
.t-qr { margin-right: 12px; }
.t-chart { margin-right: 18px; }
.t-full { margin-right: 18px; }
.t-lang { margin-right: 15px; }
.t-skin { margin-right: 15px; }
.tabs { height: 36px; padding-left: 15px; }
.tab { display: inline-flex; align-items: center; gap: 6px; height: 26px; padding: 0 8px; background: #e6f7f6; color: #0d4a4a; }
.tab::before { content: ""; width: 6px; height: 6px; margin-top: 3px; border-radius: 50%; background: #36bfba; }

main { flex: 1; display: grid; grid-template-columns: 403fr 755fr 452fr; grid-template-rows: 290fr 265fr 254fr; gap: 10px 8px; padding: 0 8px; margin-bottom: 8px; grid-template-areas: "dev map use" "mon map trend" "ten tab co"; }
main > * { min-width: 0; min-height: 0; }
.c-dev { grid-area: dev; } .c-mon { grid-area: mon; } .c-ten { grid-area: ten; }
.c-tab { grid-area: tab; } .c-use { grid-area: use; } .c-trend { grid-area: trend; } .c-co { grid-area: co; }
.card { display: flex; flex-direction: column; background: #fff; overflow: hidden; }
.hd { display: flex; align-items: center; height: 35px; padding: 5px 15px 0 10px; flex: none; }
h2 { display: flex; align-items: center; gap: 10px; font-size: 16px; line-height: 20px; color: #000; }
h2::before { content: ""; width: 5px; height: 15px; margin-top: 2px; background: #04aea9; }
.more { display: flex; align-items: center; gap: 4px; margin-left: auto; color: #606266; }
.more svg { width: 13px; height: 13px; }

.dev { flex: 1; display: flex; padding: 20px 0 0 27px; }
.donut { width: 130px; height: 130px; margin: 40px 28px 0 0; }
.stat { display: grid; grid-template-columns: 30px 86px 80px; grid-auto-rows: 28px 47px; height: 225px; }
.stat b { font-size: 17px; line-height: 22px; }
.stat b:nth-of-type(odd) { grid-column: 2; }
.sw { width: 20px; height: 10px; margin-top: 6px; border-radius: 1px; }
.blue { background: #10b7f9; } .gray { background: #9c9c9c; } .teal { background: #04aea9; }

.mon { padding: 29px 0 0 26px; display: flex; flex-direction: column; gap: 58px; }
.mrow { display: grid; grid-template-columns: 77px 173px 1fr; height: 55px; align-items: center; }
.tile { width: 54px; height: 54px; border-radius: 12px; background: #e0efee; box-shadow: 0 2px 5px rgba(0,0,0,.2); display: flex; align-items: center; justify-content: center; }
.mt { display: flex; flex-direction: column; gap: 8px; margin-top: 4px; }
.r { color: #f5222d; } .g { color: #22996e; }
.mt b, .urow b { display: flex; align-items: center; gap: 10px; line-height: 20px; }
.ar { width: 14px; height: 18px; margin-top: -4px; }

.chart { flex: 1; width: 100%; min-height: 0; }
.lab text { font-size: 12px; fill: #555; }
.end { text-anchor: end; } .mid { text-anchor: middle; }
.unit { font-size: 12px; fill: #6e7f9b; }
.grid { fill: none; stroke: #e2e2e2; stroke-dasharray: 4 3; }
.axis { fill: none; stroke: #3b4a75; }

.map { grid-area: map; position: relative; margin-top: 8px; overflow: hidden; }
.mapsvg { position: absolute; width: 100%; height: 100%; }
.water, .river { fill: #9bcefa; } .river { fill: none; stroke: #9bcefa; }
.land { fill: #f0f3fb; }
.minor { fill: none; stroke: #fde2b3; stroke-width: 4; }
.major { fill: none; stroke: #fdd269; stroke-width: 5; }
.edge { fill: none; stroke: #8f98a8; stroke-width: 3; }
.city { font-size: 12px; fill: #34435c; stroke: #fff; stroke-width: 2; paint-order: stroke; }
.big { font-size: 13px; font-weight: 500; fill: #16233d; }
.bay { font-size: 13px; fill: #3f6db0; stroke: #fff; stroke-width: 2; paint-order: stroke; }
.kpis { position: relative; display: grid; grid-template-columns: repeat(3, 1fr); gap: 10px; padding: 2px 20px 0; }
.kpi { height: 67px; padding: 9px 10px; display: grid; grid-template-columns: 15px 1fr; grid-template-rows: 20px 34px; border-radius: 4px; background: rgba(255,255,255,.75); box-shadow: 0 2px 8px rgba(0,0,0,.2); color: #444; }
.kpi::before { content: ""; width: 5px; height: 15px; margin-top: 4px; background: #3bbfbb; }
.kpi b { grid-column: 2; font-size: 19px; line-height: 40px; color: #3c827f; }
.brand { position: absolute; left: 4px; bottom: 22px; display: flex; align-items: flex-end; height: 26px; color: #e10602; font: 700 16px/16px "Liberation Sans", "Noto Sans CJK SC", sans-serif; text-shadow: 0 0 2px #fff, 0 0 3px #fff, 1px 1px #fff, -1px -1px #fff; }
.du { fill: #fff; font: 700 10px "Liberation Sans", sans-serif; text-shadow: none; }
.dt { font-size: 12px; }
.copy { position: absolute; left: 0; bottom: 3px; padding: 0 2px 0 3px; background: rgba(255,255,255,.6); font-size: 11px; line-height: 15px; white-space: nowrap; }
.copy a { color: #7a6fd0; }

table { width: calc(100% - 20px); margin: 4px 10px 0; border-collapse: collapse; table-layout: fixed; }
th { height: 40px; padding: 0 10px 2px; background: #03aea9; color: #fff; text-align: left; font-weight: 500; }
th:nth-child(-n+2) { width: 119px; } th:nth-child(3) { width: 149px; } th:nth-child(4), th:nth-child(5) { width: 90px; }
tbody::before { content: ""; display: block; height: 13px; }
td { height: 40px; padding: 0 10px 2px; white-space: nowrap; color: #222; }
tbody tr:nth-child(odd) { background: #f7f7f7; }
.o { color: #f78a2c; }

.urow { display: grid; grid-template-columns: 34px 96px 115px 1fr; column-gap: 16px; height: 84px; padding: 0 0 0 22px; border-bottom: 1px solid #e0e0e0; align-items: center; }
.urow:last-child { border: 0; }
.urow > svg { width: 34px; height: 34px; }
.urow div { display: flex; flex-direction: column; gap: 9px; min-width: 0; }
.urow span { white-space: nowrap; }
.use { padding-top: 3px; }

.etabs { display: flex; gap: 40px; height: 44px; margin: 0 0 0 12px; border-bottom: 2px solid #f0f0f0; flex: none; }
.etabs button { height: 44px; padding-top: 4px; border-bottom: 2px solid transparent; }
.etabs .on { border-color: #04aea9; color: #0d6664; font-weight: 700; }

.pop { position: fixed; right: 6px; bottom: 6px; width: 349px; height: 200px; padding: 5px 20px 0 15px; border: 1px solid #d9d9d9; background: #fff; overflow: hidden; }
.pop article { height: 66px; border-bottom: 1px solid #ccc; margin-bottom: 1px; }
.pop article:nth-of-type(3) { border: 0; }
.pop article > div { display: flex; justify-content: space-between; height: 23px; }
time { color: #b5b5b5; }
.tag { height: 20px; padding: 0 10px; border-radius: 10px; background: #e9b35f; color: #fff; font-size: 12px; }
.pop p { line-height: 16px; word-break: break-all; }
.keep { white-space: nowrap; }
.set { position: absolute; right: 4px; top: 3px; width: 25px; height: 27px; border-radius: 4px; background: #fff; display: flex; align-items: center; justify-content: center; }
.thumb { position: absolute; right: 0; top: 0; width: 6px; height: 116px; border-radius: 3px; background: #e0e0e0; }
.trans { position: fixed; right: 0; top: 582px; width: 46px; height: 40px; padding-left: 14px; border-radius: 20px 0 0 20px; background: linear-gradient(#cfdbff, #a9b9fb); }
.trans span { display: block; width: 22px; height: 22px; border-radius: 4px; background: #78a8f8; color: #fff; font-size: 16px; line-height: 21px; }
.dock { position: fixed; right: 0; top: 12px; width: 3px; height: 80px; border-radius: 6px 0 0 6px; background: #3f7dfb; }
```
